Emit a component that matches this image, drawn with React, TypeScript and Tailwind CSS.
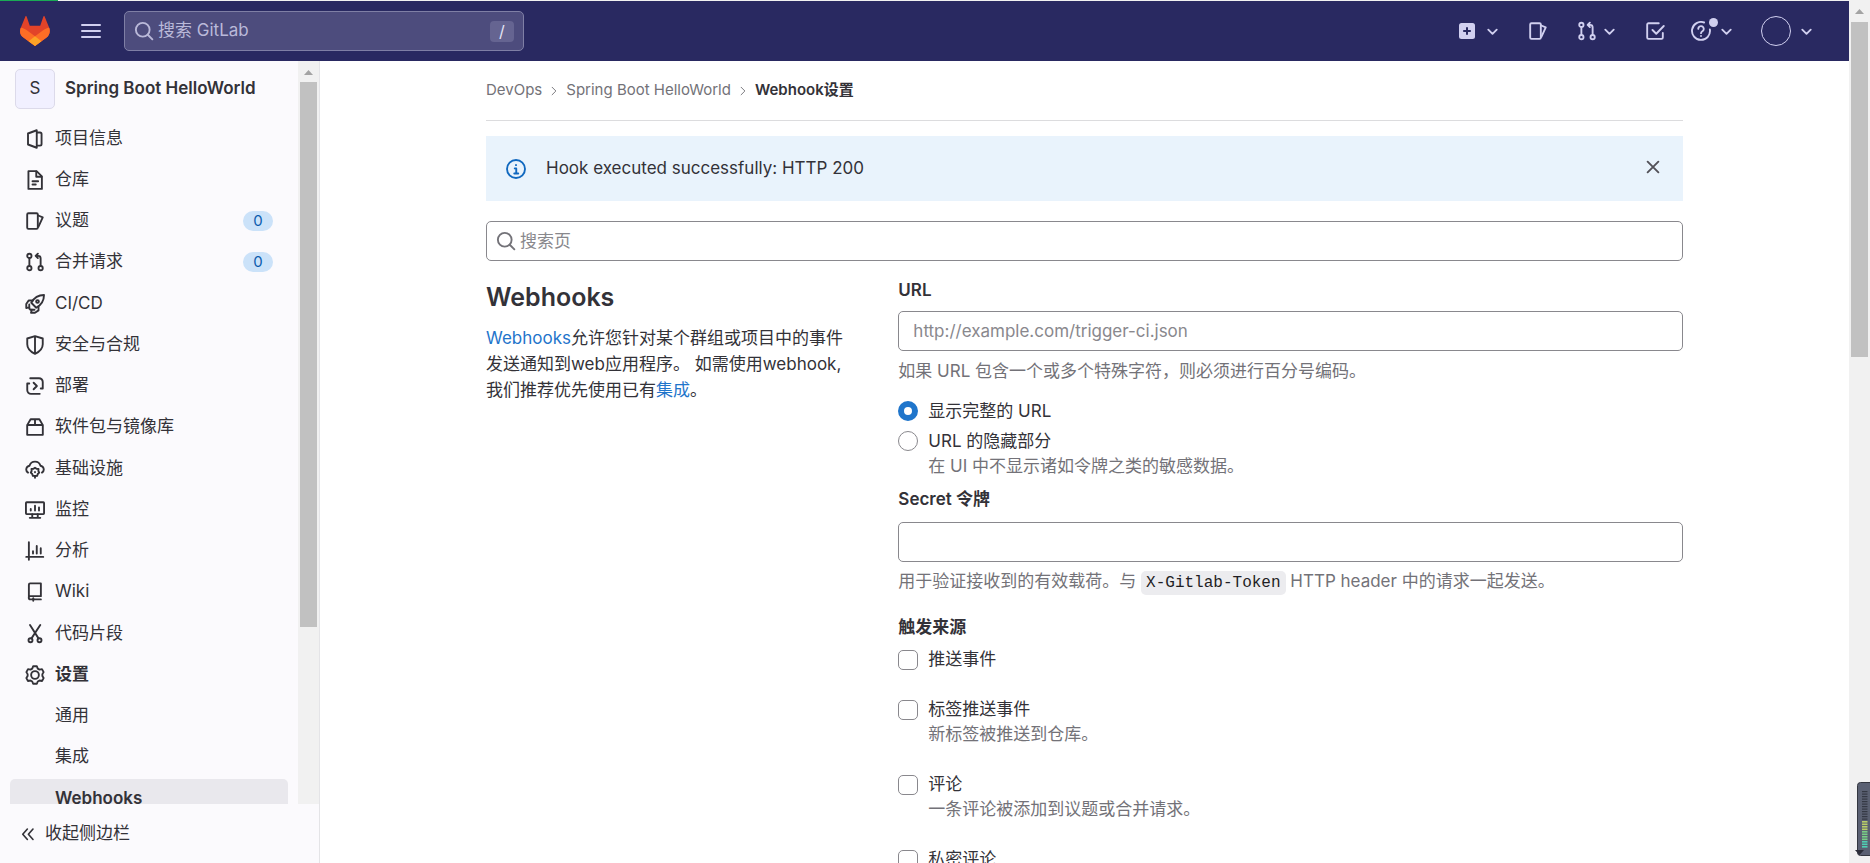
import type { ReactNode } from "react";

const stroke = {
  fill: "none",
  stroke: "currentColor",
  strokeWidth: 1.5,
  strokeLinecap: "round",
  strokeLinejoin: "round",
} as const;

function Icon({
  children,
  className = "size-5",
}: {
  children: ReactNode;
  className?: string;
}) {
  return (
    <svg
      viewBox="0 0 16 16"
      className={`${className} shrink-0`}
      aria-hidden="true"
      {...stroke}
    >
      {children}
    </svg>
  );
}

const icons = {
  project: (
    <>
      <path d="M2.4 3.6 9.4 1v14l-7-2.6z" />
      <path d="M9.8 2.75h2.200a1.250 1.250 0 0 1 1.250 1.250v8a1.250 1.250 0 0 1-1.250 1.250H9.8" />
    </>
  ),
  doc: (
    <>
      <path d="M2.75 .9h6.500l4.250 4.250v9.950H2.75z" />
      <path d="M9 1.200v4.200h4.200M6 9h4.500M6 11.600h2.600" />
    </>
  ),
  issues: (
    <>
      <rect x="1.750" y="1.750" width="8.500" height="12.500" rx="1" />
      <path d="m10.600 3.600 3.600 1.500-3.500 7.600" />
    </>
  ),
  merge: (
    <>
      <circle cx="3.500" cy="3.100" r="1.700" />
      <circle cx="3.500" cy="12.900" r="1.700" />
      <circle cx="12.500" cy="12.900" r="1.700" />
      <path d="M3.500 5v6M12.500 11V5.100a2 2 0 0 0-2-2H8.800M10.300 1.300 8.500 3.100l1.800 1.800" />
    </>
  ),
  rocket: (
    <>
      <path d="M15.200.8c-4.600 0-7.600 1.600-10.200 6.200l4 4c4.600-2.600 6.200-5.600 6.200-10.200z" />
      <circle cx="10" cy="6" r="1.100" />
      <path d="M6.200 5.200H2.900L1 8v3.200l2.600-.8M10.800 9.800v3.300L8 15H4.800l.7-2.600M3.400 8.400v3.200l1 1h3.200" />
    </>
  ),
  shield: (
    <path d="M8 .9 1.800 2.800v4.600c0 3.400 2.600 6 6.200 7.700 3.600-1.700 6.200-4.300 6.200-7.700V2.800zM8 1v14" />
  ),
  deploy: (
    <>
      <path d="M4.200 1.750h7a3 3 0 0 1 3 3V10h-1.600" />
      <path d="M11.800 14.250h-7a3 3 0 0 1-3-3V6h1.600" />
      <path d="m6.900 5.400 2.600 2.600-2.600 2.600" />
    </>
  ),
  package: (
    <path d="M1.750 6.500v7.750h12.500V6.500L11.500 1.750h-7zM1.750 6.400h12.500M8 1.800v4.500" />
  ),
  cloud: (
    <>
      <path d="M2.400 10.900A3 3 0 0 1 3.600 5.400a4.600 4.600 0 0 1 8.800 0 3 3 0 0 1 1.200 5.500" />
      <path d="m8 6.900 1.200.9 1.600.2-.1 1.600.7 1.300-1.200 1.100-.5 1.500-1.700.1-1.700-.1-.5-1.500-1.200-1.100.7-1.300L5.200 8l1.600-.2z" />
      <path d="M8 10.400v.2M8 14v1" />
    </>
  ),
  monitor: (
    <>
      <rect x=".75" y="1.750" width="14.500" height="9.500" rx=".6" />
      <path d="M4.600 7.200v1.200M8 4.600v3.800M11.200 6v2.400M5.800 11.400v2.600M10.200 11.400v2.600M3.800 14.250h8.400" />
    </>
  ),
  chart: <path d="M3.100 1v14M1 12.700h13.600M6.400 8.200v1.800M9.400 4v6M12.600 5.800v4.200" />,
  book: (
    <>
      <path d="M3.100 12.300V2.100c0-.6.500-1 1-1h8.600v10.200H4.300a1.200 1.200 0 0 0 0 2.600h8.400" />
      <path d="M6.600 13v2" />
    </>
  ),
  snippet: (
    <>
      <circle cx="4.400" cy="13" r="1.600" />
      <circle cx="11.600" cy="13" r="1.600" />
      <path d="M4 .8l6.800 10.700M12.200.8 5.200 11.500" />
    </>
  ),
  gear: (
    <>
      <circle cx="8" cy="8" r="3.100" />
      <path d="M6.500 1h3l.7 1.900 1.400.8 2-.4 1.300 2.400-1 1.600v1.500l1 1.600-1.300 2.400-2-.4-1.400.8L9.500 15h-3l-.7-1.800-1.400-.8-2 .4-1.300-2.400 1-1.600V7.300l-1-1.600 1.300-2.400 2 .4 1.400-.8z" />
    </>
  ),
};

const navItems: { label: string; icon: keyof typeof icons; count?: number }[] = [
  { label: "项目信息", icon: "project" },
  { label: "仓库", icon: "doc" },
  { label: "议题", icon: "issues", count: 0 },
  { label: "合并请求", icon: "merge", count: 0 },
  { label: "CI/CD", icon: "rocket" },
  { label: "安全与合规", icon: "shield" },
  { label: "部署", icon: "deploy" },
  { label: "软件包与镜像库", icon: "package" },
  { label: "基础设施", icon: "cloud" },
  { label: "监控", icon: "monitor" },
  { label: "分析", icon: "chart" },
  { label: "Wiki", icon: "book" },
  { label: "代码片段", icon: "snippet" },
];

const triggers = [
  { id: "push", label: "推送事件" },
  { id: "tag", label: "标签推送事件", help: "新标签被推送到仓库。" },
  { id: "note", label: "评论", help: "一条评论被添加到议题或合并请求。" },
  { id: "confidential-note", label: "私密评论" },
];

const inputClass =
  "h-10 w-full rounded-[5px] border border-[#89888d] bg-white text-[17px] text-[#333238] placeholder:text-[#89888d] outline-none";

function Chevron() {
  return (
    <Icon className="size-[15px]">
      <path strokeWidth="2" d="m3.500 6 4.500 4.500L12.500 6" />
    </Icon>
  );
}

function SearchIcon() {
  return (
    <Icon>
      <circle cx="7" cy="7" r="5.500" />
      <path d="m11 11 3.700 3.700" />
    </Icon>
  );
}

function Tanuki() {
  return (
    <svg viewBox="0 0 30 30" className="size-[30px]" aria-hidden="true">
      <path
        fill="#e24329"
        d="M5.400.4c.3-.6 1-.5 1.200.1L9.800 9.700h10.400L23.400.5c.2-.6.900-.7 1.200-.1l4.600 11.400c1.400 3.600.2 7.700-2.900 10L15 30 3.700 21.800a8.500 8.500 0 0 1-2.900-10z"
      />
      <path
        fill="#fc6d26"
        d="M.8 11.800c2.300.3 4.500 1.200 6.400 2.700L15 20.300l7.800-5.800c1.900-1.500 4.100-2.400 6.400-2.700 1.400 3.600.2 7.700-2.900 10L15 30 3.700 21.800a8.500 8.500 0 0 1-2.900-10z"
      />
      <path fill="#fca326" d="m15 20.300-6.400 4.900L15 30l6.400-4.800z" />
    </svg>
  );
}

function Header() {
  return (
    <header className="flex h-[60px] shrink-0 items-center bg-[#292961] pl-5 pr-[35px] text-[#d1d0f0]">
      <a href="#home" aria-label="GitLab">
        <Tanuki />
      </a>
      <button type="button" aria-label="菜单" className="ml-[31px]">
        <svg viewBox="0 0 20 20" className="size-5" fill="currentColor">
          <rect y="3" width="20" height="2" rx="1" />
          <rect y="9" width="20" height="2" rx="1" />
          <rect y="15" width="20" height="2" rx="1" />
        </svg>
      </button>
      <label className="ml-[23px] flex h-10 w-[400px] items-center rounded-[5px] border border-[#7f7fa5] bg-[#4d4c7d] px-[9px] text-[#bab9d9]">
        <SearchIcon />
        <input
          type="text"
          aria-label="搜索 GitLab"
          placeholder="搜索 GitLab"
          className="ml-1 min-w-0 flex-1 bg-transparent text-[17px] outline-none placeholder:text-[#bab9d9]"
        />
        <kbd className="flex h-[21px] w-6 items-center justify-center rounded-[4px] bg-[#656491] font-[inherit] text-base text-[#e4e4f5]">
          /
        </kbd>
      </label>

      <div className="ml-auto flex items-center">
        <button type="button" aria-label="新建" className="flex items-center gap-2">
          <svg viewBox="0 0 20 20" className="size-5" aria-hidden="true">
            <rect x="2" y="2" width="16" height="16" rx="2.500" fill="currentColor" />
            <path d="M10 6.200v7.600M6.200 10h7.600" stroke="#292961" strokeWidth="2" />
          </svg>
          <Chevron />
        </button>
        <a href="#issues" aria-label="议题" className="ml-7">
          <Icon>{icons.issues}</Icon>
        </a>
        <button type="button" aria-label="合并请求" className="ml-[29px] flex items-center gap-[5px]">
          <Icon>{icons.merge}</Icon>
          <Chevron />
        </button>
        <a href="#todos" aria-label="待办事项" className="ml-7">
          <Icon>
            <path d="M11 1.750H2.750a1 1 0 0 0-1 1v10.500a1 1 0 0 0 1 1h10.500a1 1 0 0 0 1-1V9.500" />
            <path d="m6 7.200 3 3 6-6.200" />
          </Icon>
        </a>
        <button type="button" aria-label="帮助" className="relative ml-[26px] flex items-center gap-2">
          <Icon>
            <path d="M10.500 1.200A7.200 7.200 0 1 0 15.100 6.800" />
            <path d="M5.800 6.300A2.200 2.200 0 1 1 9.400 8C8.500 8.600 8 8.900 8 9.700M8 11.900v.1" />
          </Icon>
          <span className="absolute -top-[3px] left-[18px] size-[9px] rounded-full bg-[#d1d0f0]" />
          <Chevron />
        </button>
        <button type="button" aria-label="用户" className="ml-[27px] flex items-center gap-2">
          <span className="size-[30px] rounded-full border border-[#d1d0f0]" />
          <Chevron />
        </button>
      </div>
    </header>
  );
}

function ScrollTrack({ thumb }: { thumb: string }) {
  return (
    <div className="flex w-[21px] shrink-0 flex-col items-center bg-[#f1f1f1]" aria-hidden="true">
      <svg viewBox="0 0 21 21" className="h-[21px] w-[21px] shrink-0">
        <path d="M6 14h9l-4.500-5z" fill="#a3a3a3" />
      </svg>
      <div className={`w-[17px] bg-[#c1c1c1] ${thumb}`} />
    </div>
  );
}

function Sidebar() {
  const row = "mx-[10px] flex h-10 items-center rounded-[5px] px-[15px]";
  return (
    <aside className="flex w-[320px] shrink-0 flex-col border-r border-[#e4e4e7] bg-[#fbfafd]">
      <div className="flex min-h-0 flex-1">
        <div className="min-w-0 flex-1 overflow-hidden">
          <a href="#project" className="ml-[15px] mt-2 flex items-center gap-[10px]">
            <span className="flex size-10 items-center justify-center rounded-[5px] border border-[#dcdaea] bg-[#f1f0ff] text-[17px]">
              S
            </span>
            <span className="text-[17px] font-semibold">Spring Boot HelloWorld</span>
          </a>
          <ul className="mt-[10px] [&>li]:mb-px [&>li:nth-child(4n)]:mb-[2px]">
            {navItems.map((item) => (
              <li key={item.label}>
                <a href="#nav" className={row}>
                  <Icon>{icons[item.icon]}</Icon>
                  <span className="ml-[10px] flex-1">{item.label}</span>
                  {item.count !== undefined && (
                    <span className="flex h-5 w-[30px] items-center justify-center rounded-full bg-[#cbe2f9] text-[15px] text-[#0b5cad]">
                      {item.count}
                    </span>
                  )}
                </a>
              </li>
            ))}
            <li>
              <a href="#settings" className={`${row} font-semibold`}>
                <Icon>{icons.gear}</Icon>
                <span className="ml-[10px]">设置</span>
              </a>
            </li>
            <li>
              <a href="#general" className={row}>
                <span className="ml-[30px]">通用</span>
              </a>
            </li>
            <li>
              <a href="#integrations" className={row}>
                <span className="ml-[30px]">集成</span>
              </a>
            </li>
            <li>
              <a href="#hooks" className={`${row} bg-[#e9e8ed] font-semibold`}>
                <span className="ml-[30px]">Webhooks</span>
              </a>
            </li>
          </ul>
        </div>
        <ScrollTrack thumb="h-[545px]" />
      </div>
      <button type="button" className="flex h-[59px] shrink-0 items-center gap-[7px] pl-[18px]">
        <Icon>
          <path strokeWidth="1.300" d="M7.500 4 3.800 8.200l3.700 4.200M12 4 8.300 8.200l3.700 4.200" />
        </Icon>
        收起侧边栏
      </button>
    </aside>
  );
}

function Main() {
  return (
    <main className="min-w-0 flex-1 overflow-hidden bg-white">
      <div className="mx-auto max-w-[1237px] px-5">
        <nav
          aria-label="面包屑"
          className="flex h-[60px] items-center gap-[7px] border-b border-[#dcdcde] text-[15px] text-[#737278]"
        >
          <a href="#devops">DevOps</a>
          <Icon className="size-[10px]">
            <path d="m5 2 6 6-6 6" />
          </Icon>
          <a href="#project">Spring Boot HelloWorld</a>
          <Icon className="size-[10px]">
            <path d="m5 2 6 6-6 6" />
          </Icon>
          <a href="#hooks" className="font-semibold text-[#333238]">
            Webhook设置
          </a>
        </nav>

        <div role="alert" className="mt-[15px] flex h-[65px] items-center bg-[#e9f3fc] px-5">
          <Icon className="size-5 text-[#1068bf]">
            <circle cx="8" cy="8" r="7.200" />
            <path d="M7 7.500h1.200v4M6.600 11.600h3.200M8 4.700v.2" />
          </Icon>
          <span className="ml-5">Hook executed successfully: HTTP 200</span>
          <button type="button" aria-label="关闭" className="mb-1 ml-auto text-[#535158]">
            <Icon>
              <path d="m3.700 3.700 8.600 8.600M12.300 3.700l-8.600 8.600" />
            </Icon>
          </button>
        </div>

        <label className="relative mt-5 block">
          <span className="absolute left-[10px] top-[10px] text-[#737278]">
            <SearchIcon />
          </span>
          <input
            type="text"
            aria-label="搜索页"
            placeholder="搜索页"
            className={`${inputClass} pl-[33px] pr-3`}
          />
        </label>

        <div className="mt-4 grid grid-cols-3 gap-x-10">
          <section>
            <h4 className="mt-1 text-[25px] font-semibold leading-8">Webhooks</h4>
            <p className="mt-3 leading-[26px]">
              <a href="#docs" className="text-[#1f75cb]">
                Webhooks
              </a>
              允许您针对某个群组或项目中的事件发送通知到web应用程序。 如需使用webhook, 我们推荐优先使用已有
              <a href="#integrations" className="text-[#1f75cb]">
                集成
              </a>
              。
            </p>
          </section>

          <form className="col-span-2 leading-[26px]">
            <label htmlFor="url" className="block font-semibold">
              URL
            </label>
            <input
              id="url"
              type="text"
              placeholder="http://example.com/trigger-ci.json"
              className={`${inputClass} mt-2 px-[14px]`}
            />
            <p className="mt-[7px] text-[#737278]">
              如果 URL 包含一个或多个特殊字符，则必须进行百分号编码。
            </p>

            <div className="mt-[14px] flex flex-col gap-1">
              <label className="flex items-center gap-[10px]">
                <input
                  type="radio"
                  name="mask"
                  defaultChecked
                  className="size-5 appearance-none rounded-full border border-[#89888d] checked:border-[6px] checked:border-[#1f75cb]"
                />
                显示完整的 URL
              </label>
              <label className="flex items-center gap-[10px]">
                <input
                  type="radio"
                  name="mask"
                  className="size-5 appearance-none rounded-full border border-[#89888d] checked:border-[6px] checked:border-[#1f75cb]"
                />
                URL 的隐藏部分
              </label>
            </div>
            <p className="ml-[30px] leading-[25px] text-[#737278]">
              在 UI 中不显示诸如令牌之类的敏感数据。
            </p>

            <label htmlFor="token" className="mt-[7px] block font-semibold">
              Secret 令牌
            </label>
            <input id="token" type="text" className={`${inputClass} mt-[10px] px-[14px]`} />
            <p className="mt-[6px] text-[#737278]">
              用于验证接收到的有效载荷。与{" "}
              <code className="rounded-[5px] bg-[#ececef] px-[5px] py-[3px] font-['Liberation_Mono',monospace] text-base text-[#1f1e24]">
                X-Gitlab-Token
              </code>{" "}
              HTTP header 中的请求一起发送。
            </p>

            <fieldset className="mt-[19px]">
              <legend className="font-semibold">触发来源</legend>
              <div className="mt-[7px] flex flex-col gap-[25px] leading-[25px]">
                {triggers.map((trigger) => (
                  <div key={trigger.id}>
                    <label className="flex items-center gap-[10px]">
                      <input
                        type="checkbox"
                        name={trigger.id}
                        className="size-5 appearance-none rounded-[5px] border border-[#89888d] checked:bg-[#1f75cb]"
                      />
                      {trigger.label}
                    </label>
                    {trigger.help && <p className="ml-[30px] text-[#737278]">{trigger.help}</p>}
                  </div>
                ))}
              </div>
            </fieldset>
          </form>
        </div>
      </div>
    </main>
  );
}

// Level meter docked to the right edge of the window
function LevelMeter() {
  return (
    <svg
      viewBox="0 0 15 76"
      className="absolute bottom-[6px] right-0 h-[76px] w-[15px]"
      aria-hidden="true"
    >
      <rect x="2.500" y="1.500" width="16" height="73" rx="3" fill="#5a6072" stroke="#33363f" />
      {Array.from({ length: 12 }, (_, i) => (
        <rect key={i} x="7" y={10 + i * 2.5} width="5.500" height="1.200" fill="#343844" />
      ))}
      {Array.from({ length: 11 }, (_, i) => (
        <rect
          key={i}
          x="7"
          y={40 + i * 2.5}
          width="5.500"
          height="1.600"
          fill={i < 4 ? "#b9cf68" : i < 8 ? "#79cf86" : "#4fd0b4"}
        />
      ))}
      <path d="M0 69h9l-4.500 5z" fill="#2b2d38" />
    </svg>
  );
}

export default function App() {
  return (
    <div className="relative flex h-screen overflow-hidden bg-white font-['Inter','Noto_Sans_CJK_SC',sans-serif] text-[17px] text-[#333238]">
      <div className="flex min-w-0 flex-1 flex-col">
        <div className="h-px shrink-0 bg-[#f1f1f1]">
          <div className="h-px w-[58px] bg-[#1aaa55]" />
        </div>
        <Header />
        <div className="flex min-h-0 flex-1">
          <Sidebar />
          <Main />
        </div>
      </div>
      <ScrollTrack thumb="mt-px h-[335px]" />
      <LevelMeter />
    </div>
  );
}
